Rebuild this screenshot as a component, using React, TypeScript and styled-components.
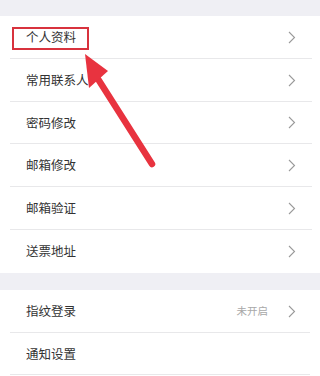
import React from "react";
import styled, { createGlobalStyle } from "styled-components";

const Global = createGlobalStyle`
  html, body { margin: 0; padding: 0; background: #ffffff; }
  body { font-family: "Noto Sans CJK SC", "Noto Sans", sans-serif; }
`;

const Page = styled.div`
  position: relative;
  width: 320px;
  height: 376px;
  overflow: hidden;
  background: #ffffff;
`;

const Band = styled.div<{ $h: number }>`
  height: ${(p) => p.$h}px;
  background: #efeff4;
`;

const Group = styled.div`
  display: flex;
  flex-direction: column;
  background: #ffffff;
`;

const Row = styled.div<{ $h: number; $line: boolean; $lineRight: number }>`
  position: relative;
  height: ${(p) => p.$h}px;
  display: flex;
  align-items: center;
  padding: 0 24px 0 26px;
  box-sizing: border-box;
  &::after {
    content: "";
    display: ${(p) => (p.$line ? "block" : "none")};
    position: absolute;
    left: 10px;
    right: ${(p) => p.$lineRight}px;
    bottom: 0;
    height: 1px;
    background: #e8e8ea;
  }
`;

const Label = styled.span`
  flex: 1;
  font-size: 12.5px;
  color: #333333;
  letter-spacing: 0;
  line-height: 1;
`;

const Value = styled.span`
  font-size: 10.5px;
  color: #a8a8a8;
  margin-right: 20px;
  line-height: 1;
`;

const Chevron = () => (
  <svg width="8" height="13" viewBox="0 0 8 13" style={{ display: "block" }}>
    <path d="M1 1 L6.5 6.5 L1 12" fill="none" stroke="#9a9a9a" strokeWidth="1.1" />
  </svg>
);

const Highlight = styled.div`
  position: absolute;
  left: 12px;
  top: 27px;
  width: 77px;
  height: 23px;
  box-sizing: border-box;
  border: 2px solid #d8323d;
`;

const ArrowLayer = styled.svg`
  position: absolute;
  left: 0;
  top: 0;
  pointer-events: none;
`;

type Item = { label: string; value?: string };

const group1: Item[] = [
  { label: "个人资料" },
  { label: "常用联系人" },
  { label: "密码修改" },
  { label: "邮箱修改" },
  { label: "邮箱验证" },
  { label: "送票地址" },
];

const group2: Item[] = [{ label: "指纹登录", value: "未开启" }, { label: "通知设置" }];

export default function App() {
  return (
    <Page>
      <Global />
      <Band $h={16} />
      <Group>
        {group1.map((it, i) => (
          <Row key={it.label} $h={42.75} $line={i < group1.length - 1} $lineRight={8}>
            <Label>{it.label}</Label>
            <Chevron />
          </Row>
        ))}
      </Group>
      <Band $h={17.5} />
      <Group>
        {group2.map((it, i) => (
          <Row key={it.label} $h={42.5} $line={true} $lineRight={10}>
            <Label>{it.label}</Label>
            {it.value && <Value>{it.value}</Value>}
            {i === 0 ? <Chevron /> : null}
          </Row>
        ))}
      </Group>
      <Highlight />
      <ArrowLayer width="320" height="376" viewBox="0 0 320 376">
        <line x1="152" y1="164" x2="98" y2="79" stroke="#e8333f" strokeWidth="6.5" strokeLinecap="round" />
        <polygon points="85,54 108,71 89,88" fill="#e8333f" />
      </ArrowLayer>
    </Page>
  );
}
